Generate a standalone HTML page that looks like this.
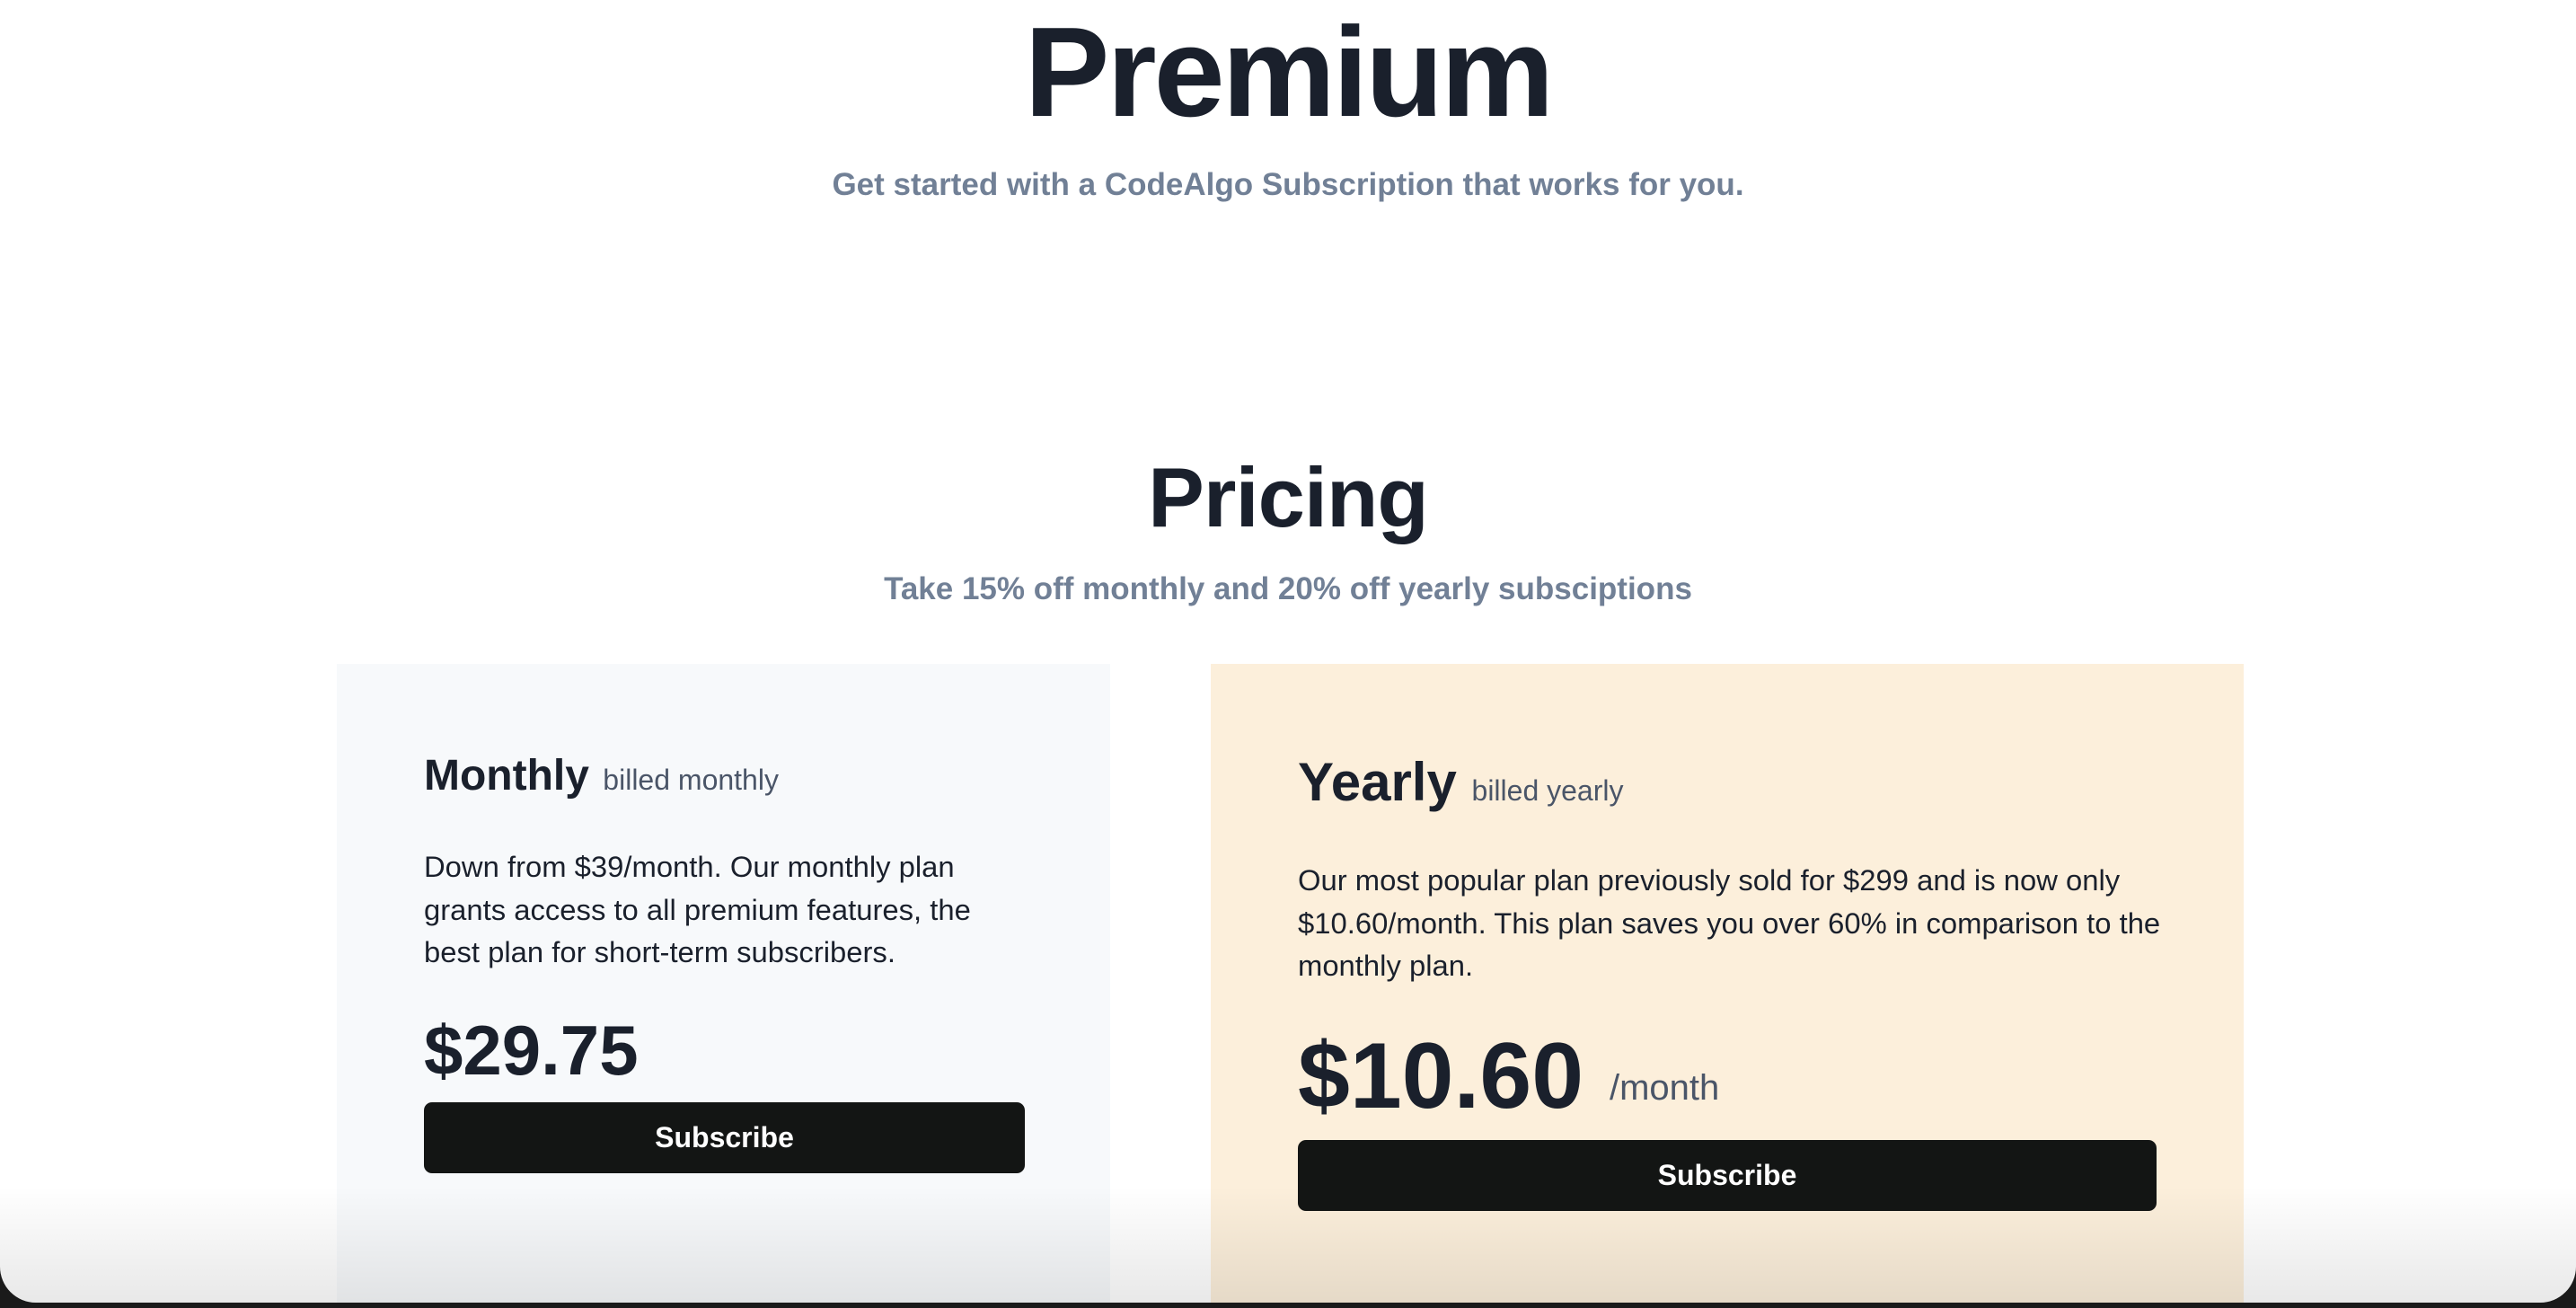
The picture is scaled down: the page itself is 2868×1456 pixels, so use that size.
<!DOCTYPE html>
<html><head><meta charset="utf-8"><style>
*{margin:0;padding:0;box-sizing:border-box}
html,body{width:2868px;height:1456px;overflow:hidden;background:#1a1a1a;font-family:"Liberation Sans",sans-serif}
.frame{position:absolute;left:0;top:0;width:2868px;height:1450px;background:#fff;border-radius:0 0 40px 40px;overflow:hidden}
.abs{position:absolute}
.c{left:0;width:2868px;text-align:center}
h1{font-size:142px;font-weight:bold;color:#1a202c;letter-spacing:-3px}
.sub{font-size:35px;color:#718096;font-weight:bold}
.card{position:absolute;top:739px;height:720px}
.t{position:absolute;font-weight:bold;color:#1a202c}
.g{font-weight:normal;color:#4a5568}
.p{position:absolute;font-size:32.8px;line-height:47.5px;color:#1a202c}
.btn{position:absolute;background:#131514;border-radius:9px;color:#fff;font-size:32px;font-weight:bold;display:flex;align-items:center;justify-content:center}
.shade{position:absolute;left:0;right:0;bottom:0;height:130px;background:linear-gradient(to bottom,rgba(0,0,0,0),rgba(0,0,0,0.09));pointer-events:none}
</style></head><body>
<div class="frame">
<h1 class="abs c" style="top:-4px;line-height:170px">Premium</h1>
<div class="abs c sub" style="top:186px">Get started with a CodeAlgo Subscription that works for you.</div>
<h1 class="abs c" style="top:494px;font-size:94px;line-height:120px;letter-spacing:-1px">Pricing</h1>
<div class="abs c sub" style="top:636px">Take 15% off monthly and 20% off yearly subsciptions</div>

<div class="card" style="left:375px;width:861px;background:#f7f9fb"></div>
<div class="t" style="left:472px;top:836px;font-size:48px">Monthly <span class="g" style="font-size:32px;margin-left:2px">billed monthly</span></div>
<div class="p" style="left:472px;top:941px;width:630px">Down from $39/month. Our monthly plan grants access to all premium features, the best plan for short-term subscribers.</div>
<div class="t" style="left:472px;top:1124px;font-size:78px">$29.75</div>
<div class="btn" style="left:472px;top:1227px;width:669px;height:79px">Subscribe</div>

<div class="card" style="left:1348px;width:1150px;background:#fcefdb"></div>
<div class="t" style="left:1445px;top:836px;font-size:60px">Yearly <span class="g" style="font-size:32px;margin-left:0px">billed yearly</span></div>
<div class="p" style="left:1445px;top:956px;width:1000px">Our most popular plan previously sold for $299 and is now only $10.60/month. This plan saves you over 60% in comparison to the monthly plan.</div>
<div class="t" style="left:1445px;top:1139px;font-size:104px">$10.60 <span class="g" style="font-size:40px;margin-left:0px;position:relative;top:-9px">/month</span></div>
<div class="btn" style="left:1445px;top:1269px;width:956px;height:79px">Subscribe</div>
<div class="shade"></div>
</div>
</body></html>
